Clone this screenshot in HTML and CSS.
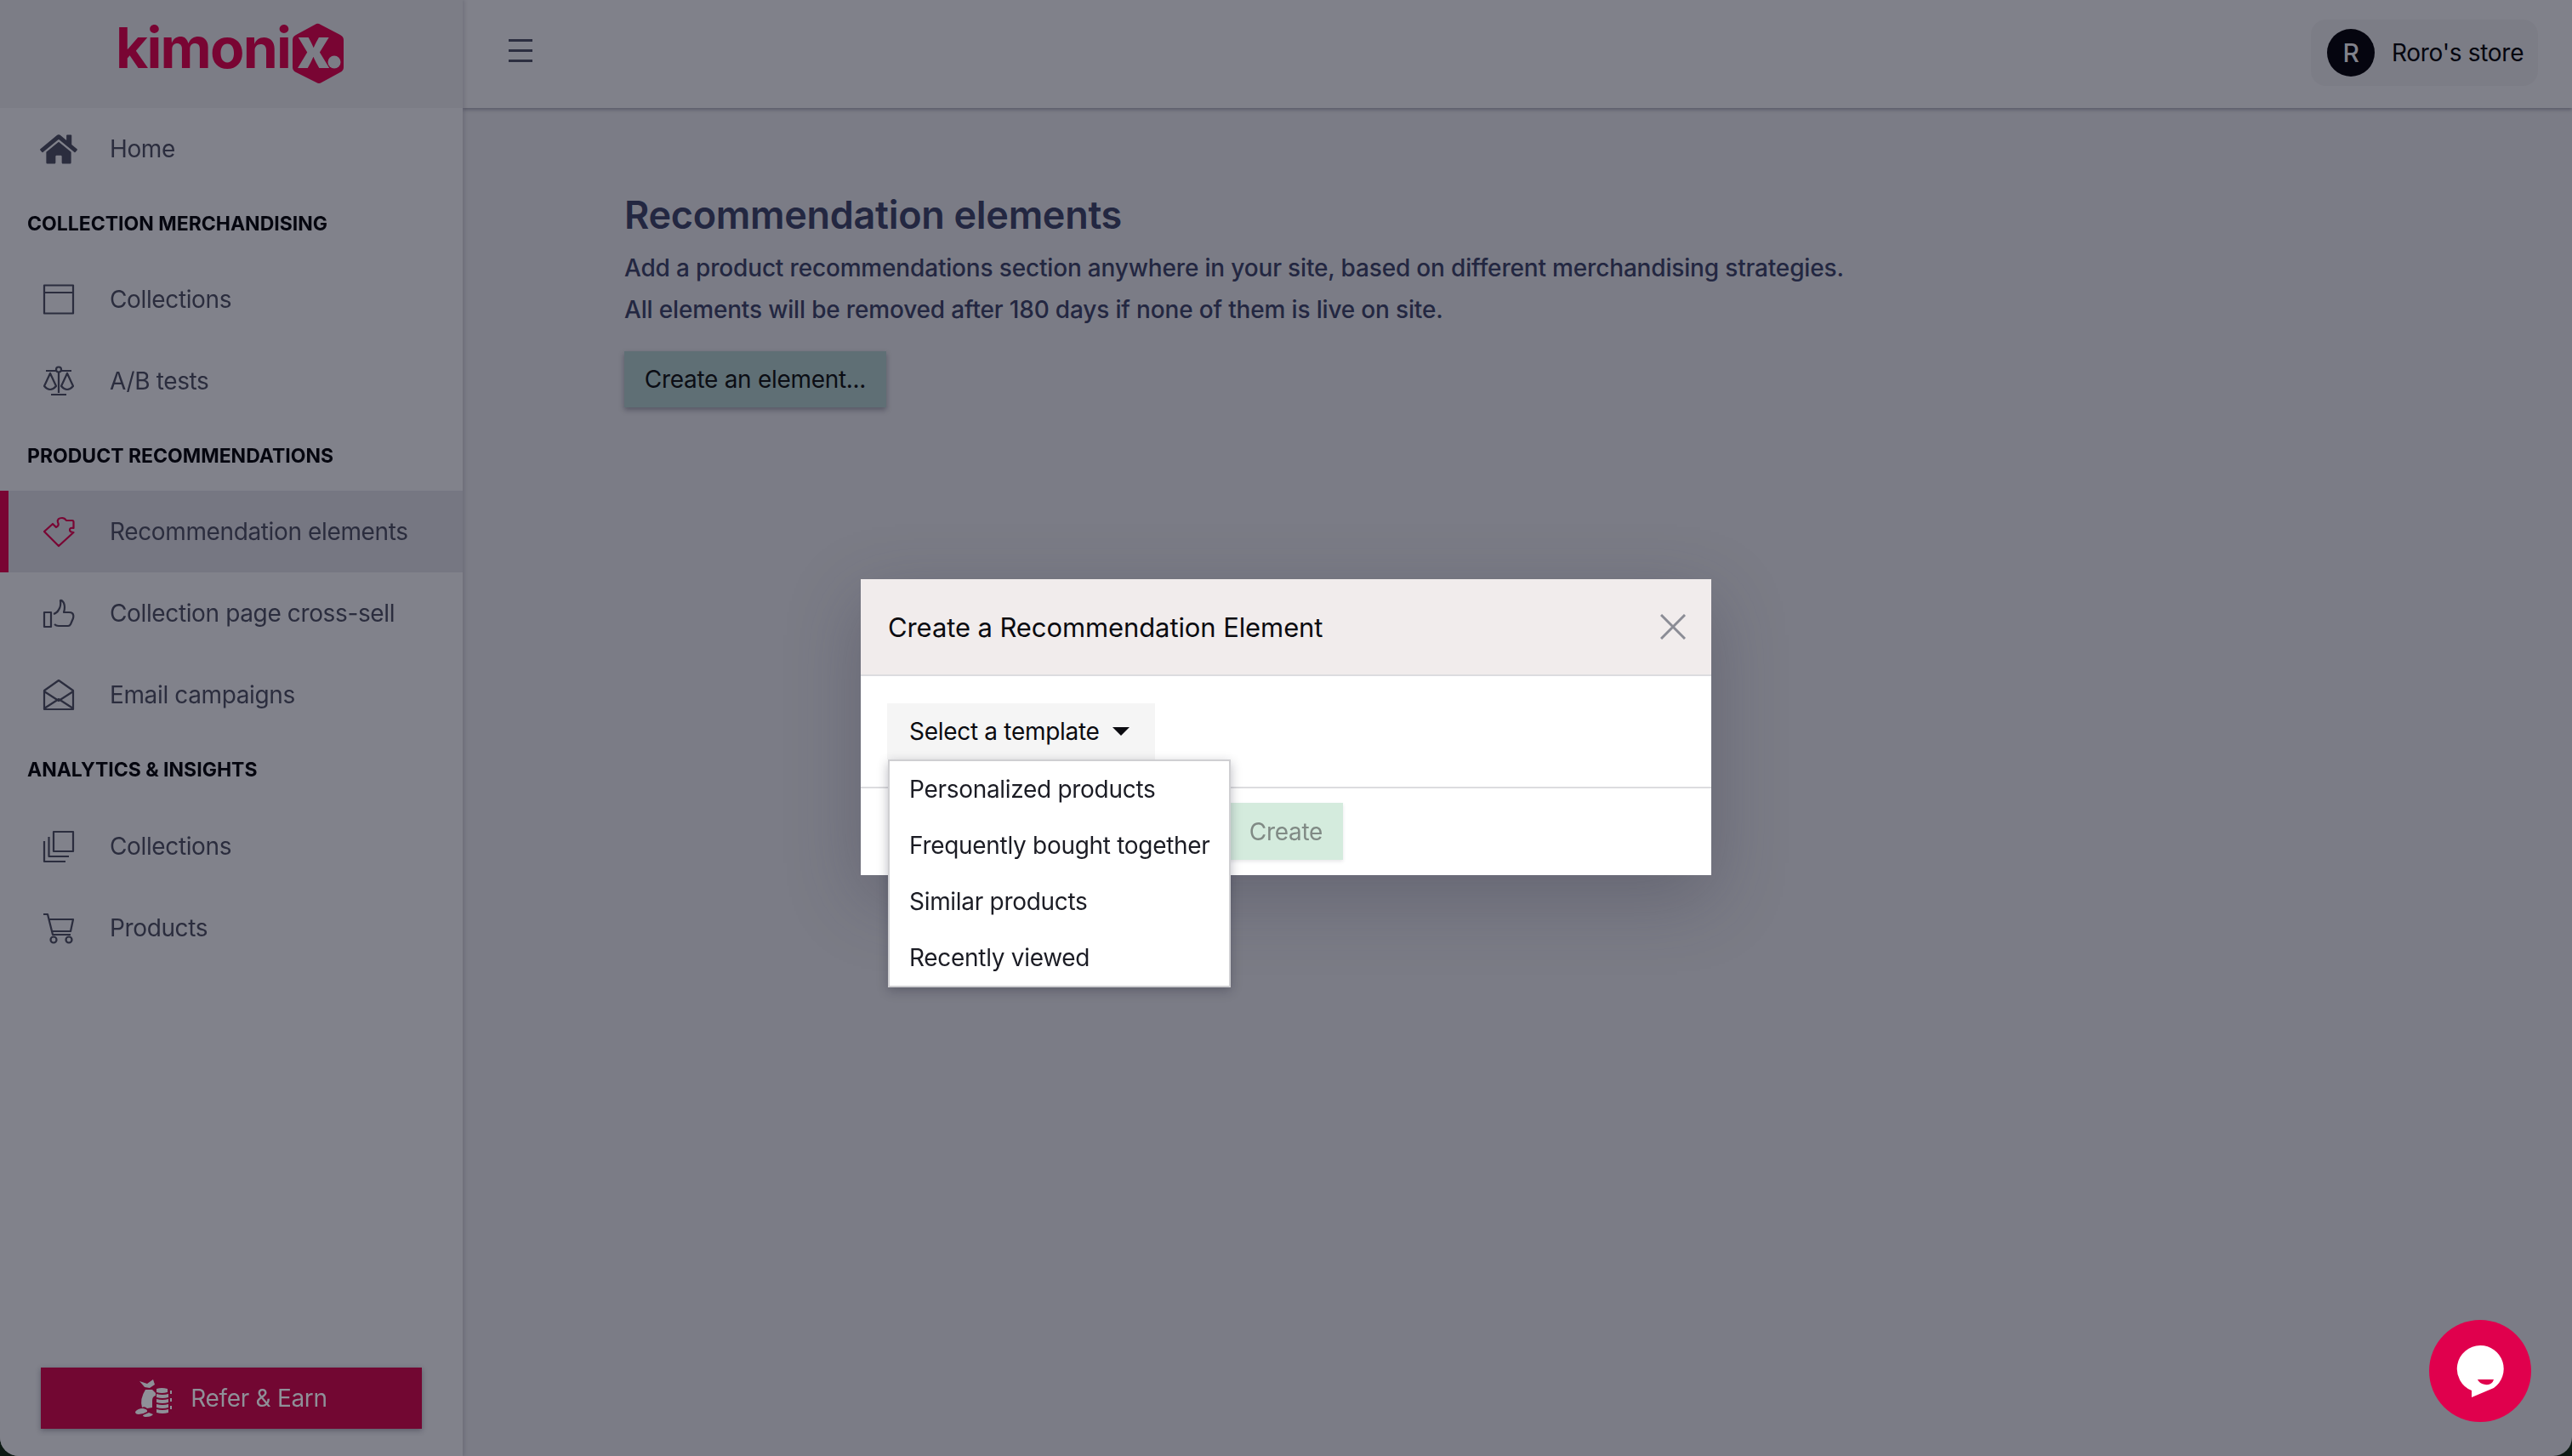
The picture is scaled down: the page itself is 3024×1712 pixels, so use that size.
FILE: index.html
```html
<!DOCTYPE html>
<html lang="en">
<head>
  <meta charset="UTF-8">
  <meta name="viewport" content="width=device-width, initial-scale=1.0">
  <title>Recommendation elements</title>
  <link rel="stylesheet" href="styles.css">
</head>
<body>
  <div class="app">
    <aside class="sidebar">
      <div class="logo">
        <svg width="276" height="112" viewBox="-6 -20 276 112">
          <text class="logo-word" x="-4" y="55">kimoni</text>
          <path class="logo-hex" d="M232 3 Q234 2 237 4 L260 16 Q264 18 264 22 L264 54 Q264 58 260 60 L238 72 Q235 74 232 72 L208 60 Q204 58 204 54 L204 22 Q204 18 208 16 Z"/>
          <text class="logo-x" x="209" y="55">x</text>
          <circle class="logo-dot" cx="253" cy="48" r="7.500"/>
        </svg>
      </div>

      <a class="nav-item">
        <svg class="icon icon-home" viewBox="0 0 576 512"><path class="solid" d="M280.37 148.26L96 300.11V464a16 16 0 0 0 16 16l112.06-.29a16 16 0 0 0 15.92-16V368a16 16 0 0 1 16-16h64a16 16 0 0 1 16 16v95.64a16 16 0 0 0 16 16.05L464 480a16 16 0 0 0 16-16V300L295.67 148.26a12.19 12.19 0 0 0-15.3 0zM571.6 251.47L488 182.56V44.05a12 12 0 0 0-12-12h-56a12 12 0 0 0-12 12v72.61L318.47 43a48 48 0 0 0-61 0L4.34 251.47a12 12 0 0 0-1.6 16.9l25.5 31A12 12 0 0 0 45.15 301l235.22-193.74a12.19 12.19 0 0 1 15.3 0L530.9 301a12 12 0 0 0 16.9-1.6l25.5-31a12 12 0 0 0-1.7-16.93z"/></svg>
        <span>Home</span>
      </a>

      <div class="nav-heading">COLLECTION MERCHANDISING</div>
      <a class="nav-item">
        <svg class="icon" viewBox="0 0 36 36"><path d="M1 1.500H35V34.500H1ZM1 10H35"/></svg>
        <span>Collections</span>
      </a>
      <a class="nav-item">
        <svg class="icon" viewBox="0 0 36 36"><path d="M18 7V32M9 34H27M3 6H15M21 6H33"/><circle cx="18" cy="4.500" r="3"/><path d="M8 9L1 24Q8 32 15 24ZM28 9L21 24Q28 32 35 24Z"/></svg>
        <span>A/B tests</span>
      </a>

      <div class="nav-heading">PRODUCT RECOMMENDATIONS</div>
      <a class="nav-item active">
        <svg class="icon" viewBox="0 0 36 36"><path d="M1 18L11 9L15 13Q19 11 17 7Q16 2 22 2Q25 2 27 5L34 5Q35.500 5 35.500 7L35.500 14Q31 13 31 16Q31 19 35.500 19L18 35Z"/></svg>
        <span>Recommendation elements</span>
      </a>
      <a class="nav-item">
        <svg class="icon" viewBox="0 0 36 36"><path d="M1 17H9V34H1ZM13 31Q15 33 18 33H29Q31 33 32 31L35 24Q36 20 34 18Q33 17 30 17H24Q26 11 24 6Q22 2 20 3Q21 10 18 14Q16 18 12 19"/></svg>
        <span>Collection page cross-sell</span>
      </a>
      <a class="nav-item">
        <svg class="icon" viewBox="0 0 36 36"><path d="M1 35V13L18 1L35 13V35ZM1 14L18 25L35 14M1 34L18 23L35 34"/></svg>
        <span>Email campaigns</span>
      </a>

      <div class="nav-heading nav-heading-tall">ANALYTICS &amp; INSIGHTS</div>
      <a class="nav-item">
        <svg class="icon" viewBox="0 0 36 36"><path d="M12 1H35V24H12ZM6.500 7V30H30M1 12V36H26"/></svg>
        <span>Collections</span>
      </a>
      <a class="nav-item">
        <svg class="icon" viewBox="0 0 36 36"><path d="M0 2H5L11 26H32M6.500 8H35L32 22H10"/><circle cx="12" cy="32" r="3.500"/><circle cx="30" cy="32" r="3.500"/></svg>
        <span>Products</span>
      </a>

      <button class="refer-btn">
        <svg class="refer-icon" viewBox="0 0 44 44">
          <path d="M5 2L14 5L21 0L23 6L17 10L11 9ZM12 12L20 12L24 16L24 19Q20 20 20 25V33L14 34Q11 31 8 33Q5 23 12 12Z"/>
          <path d="M0 38Q3 34 9 34Q15 35 14 38Q9 41 4 41Q0 41 0 38ZM9 42L16 39L21 41Q19 44 13 44Q9 44 9 42Z"/>
          <path d="M25 11Q31 9 38 11V15Q31 17 25 15ZM25 17Q32 19 39 17V21Q32 23 25 21ZM25 23Q32 25 39 23V27Q32 29 25 27ZM25 29Q32 31 39 29V33Q32 35 25 33ZM25 35Q32 37 39 35V39Q32 41 25 39ZM41 13H43V17H41ZM41 22H43V26H41ZM41 31H43V35H41Z"/>
        </svg>
        Refer &amp; Earn
      </button>
    </aside>

    <div class="main">
      <header class="topbar">
        <div class="menu-toggle"><i></i><i></i><i></i></div>
        <div class="store">
          <span class="avatar">R</span>
          <span>Roro's store</span>
        </div>
      </header>

      <section class="content">
        <h1>Recommendation elements</h1>
        <p>Add a product recommendations section anywhere in your site, based on different merchandising strategies.</p>
        <p>All elements will be removed after 180 days if none of them is live on site.</p>
        <button class="create-btn">Create an element...</button>
      </section>
    </div>
  </div>

  <div class="backdrop">
    <div class="modal">
      <div class="modal-header">
        <span>Create a Recommendation Element</span>
        <svg class="close" viewBox="0 0 30 30"><path d="M1 1L29 29M29 1L1 29"/></svg>
      </div>
      <div class="modal-body">
        <div class="select">
          <button class="select-btn">Select a template <i class="caret"></i></button>
          <ul class="menu">
            <li>Personalized products</li>
            <li>Frequently bought together</li>
            <li>Similar products</li>
            <li>Recently viewed</li>
          </ul>
        </div>
      </div>
      <div class="modal-footer">
        <button class="submit-btn">Create</button>
      </div>
    </div>
  </div>

  <div class="chat">
    <svg width="56" height="62" viewBox="0 0 56 62">
      <path class="chat-bubble" d="M28 0A27.500 27.500 0 0 1 44 50L18 61L18 53A27.500 27.500 0 0 1 28 0Z"/>
      <path class="chat-smile" d="M25 40H44Q42 47 34 46Q27 45 25 40Z"/>
    </svg>
  </div>
</body>
</html>
```

FILE: styles.css
```css
* {
  box-sizing: border-box;
}

html, body {
  margin: 0;
  height: 100%;
}

body {
  font-family: 'Inter', 'Liberation Sans', sans-serif;
  font-size: 28px;
  letter-spacing: -0.3px;
  color: #2b2d3e;
  background: #0d1a14;
  overflow: hidden;
}

.app {
  display: flex;
  height: 1712px;
  border-radius: 0 0 22px 22px;
  overflow: hidden;
  background: #7b7c86;
}

/* sidebar */
.sidebar {
  width: 544px;
  flex-shrink: 0;
  display: flex;
  flex-direction: column;
  background: #81828b;
  box-shadow: 2px 0 4px rgba(30, 30, 50, 0.15);
  position: relative;
  z-index: 1;
}

.logo {
  height: 127px;
  flex-shrink: 0;
  padding: 5px 0 0 134px;
  background: #7c7d86;
}

.logo svg {
  display: block;
}

.logo-word {
  font-family: 'Inter', sans-serif;
  font-weight: 700;
  font-size: 66px;
  letter-spacing: -1.800px;
  fill: #790533;
}

.logo-hex {
  fill: #790533;
}

.logo-x {
  font-family: 'Inter', sans-serif;
  font-weight: 800;
  font-size: 66px;
  letter-spacing: 0;
  fill: #7c7d86;
}

.logo-dot {
  fill: #7c7d86;
}

.nav-item {
  height: 96px;
  flex-shrink: 0;
  display: flex;
  align-items: center;
  gap: 42px;
  padding-left: 51px;
  letter-spacing: -0.37px;
}

.nav-item.active {
  background: #767782;
  box-shadow: inset 10px 0 0 #790533;
}

.icon {
  width: 36px;
  height: 36px;
  flex-shrink: 0;
  fill: none;
  stroke: #2b2d3e;
  stroke-width: 2.200;
  stroke-linejoin: round;
  overflow: visible;
}

.active .icon {
  stroke: #790533;
}

.icon-home {
  width: 44px;
  height: 39px;
  margin: 0 -4px;
  stroke: none;
}

.icon-home .solid {
  fill: #2b2d3e;
}

.nav-heading {
  height: 81px;
  flex-shrink: 0;
  display: flex;
  align-items: center;
  padding: 0 0 2px 32px;
  font-size: 23px;
  font-weight: 700;
  letter-spacing: 0;
  color: #05060f;
}

.nav-heading-tall {
  height: 82px;
}

.refer-btn {
  margin: auto 48px 32px;
  height: 72px;
  flex-shrink: 0;
  display: flex;
  align-items: center;
  justify-content: center;
  gap: 21px;
  border: none;
  background: #720732;
  color: #8f9098;
  font-family: inherit;
  font-size: 28px;
  letter-spacing: -0.3px;
  box-shadow: 0 2px 6px rgba(20, 20, 40, 0.35);
}

.refer-icon {
  width: 44px;
  height: 44px;
  fill: #8f9098;
}

/* top bar and page */
.main {
  flex: 1;
  display: flex;
  flex-direction: column;
}

.topbar {
  height: 127px;
  flex-shrink: 0;
  display: flex;
  align-items: center;
  justify-content: space-between;
  padding: 0 40px 3px 54px;
  background: #80818a;
  box-shadow: 0 2px 4px rgba(30, 30, 50, 0.35);
}

.menu-toggle {
  display: flex;
  flex-direction: column;
  gap: 9px;
  width: 28px;
  margin-top: -5px;
}

.menu-toggle i {
  height: 3px;
  background: #2c2e40;
}

.store {
  width: 267px;
  height: 78px;
  display: flex;
  align-items: center;
  gap: 20px;
  padding-left: 19px;
  border-radius: 18px;
  background: #7c7d86;
  color: #05060f;
}

.avatar {
  width: 56px;
  height: 56px;
  border-radius: 50%;
  display: flex;
  align-items: center;
  justify-content: center;
  background: #05050f;
  color: #81828b;
  font-size: 30px;
  font-weight: 500;
}

.content {
  padding: 94px 0 0 190px;
  color: #232741;
}

.content h1 {
  margin: 0 0 6px;
  font-size: 45px;
  font-weight: 600;
  line-height: 64px;
  color: #232741;
}

.content p {
  margin: 0;
  font-size: 28px;
  font-weight: 500;
  line-height: 49px;
  letter-spacing: -0.17px;
}

.create-btn {
  display: block;
  margin-top: 24px;
  width: 308px;
  height: 66px;
  border: none;
  background: #5f6f75;
  color: #0b0d14;
  font-family: inherit;
  font-size: 28px;
  letter-spacing: -0.3px;
  box-shadow: 0 3px 6px rgba(20, 20, 40, 0.35);
}

/* modal */
.backdrop {
  position: fixed;
  inset: 0;
  display: flex;
  align-items: center;
  justify-content: center;
  padding-bottom: 2px;
}

.modal {
  width: 1000px;
  background: #fff;
  box-shadow: 0 26px 80px rgba(50, 50, 70, 0.3);
}

.modal-header {
  height: 114px;
  display: flex;
  align-items: center;
  justify-content: space-between;
  padding: 0 30px 0 32px;
  background: #f1ecec;
  border-bottom: 2px solid #dcdcdf;
  font-size: 31px;
  font-weight: 400;
  letter-spacing: -0.1px;
  color: #0b0b10;
}

.close {
  width: 30px;
  height: 30px;
  fill: none;
  stroke: #8b8c95;
  stroke-width: 3;
}

.modal-body {
  height: 132px;
  padding: 32px;
  border-bottom: 2px solid #dcdcdf;
}

.select {
  position: relative;
}

.select-btn {
  display: flex;
  align-items: center;
  gap: 14px;
  width: 315px;
  height: 66px;
  margin-left: -1px;
  padding: 0 0 0 26px;
  border: none;
  background: #f5f5f5;
  color: #0b0b10;
  font-family: inherit;
  font-size: 28px;
  letter-spacing: -0.3px;
}

.caret {
  width: 0;
  height: 0;
  border-left: 10px solid transparent;
  border-right: 10px solid transparent;
  border-top: 10px solid #0b0b10;
  margin-left: 1px;
}

.menu {
  position: absolute;
  left: 0;
  top: 66px;
  z-index: 2;
  margin: 0;
  padding: 0;
  width: 403px;
  list-style: none;
  background: #fff;
  border: 2px solid #cfcfd2;
  box-shadow: 0 4px 12px rgba(30, 30, 50, 0.3);
  color: #1b1c24;
}

.menu li {
  height: 66px;
  display: flex;
  align-items: center;
  padding-left: 23px;
  white-space: nowrap;
}

.modal-footer {
  height: 102px;
  display: flex;
  justify-content: center;
  padding-top: 17px;
}

.submit-btn {
  width: 134px;
  height: 67px;
  border: none;
  background: #d4ebdd;
  color: #808a85;
  font-family: inherit;
  font-size: 28px;
  letter-spacing: -0.3px;
  box-shadow: 0 2px 4px rgba(60, 60, 70, 0.12);
}

/* chat launcher */
.chat {
  position: fixed;
  right: 48px;
  bottom: 40px;
  width: 120px;
  height: 120px;
  border-radius: 50%;
  background: #e0004d;
  display: flex;
  align-items: center;
  justify-content: center;
  padding-top: 2px;
}

.chat-bubble {
  fill: #fff;
}

.chat-smile {
  fill: #e0004d;
}
```
